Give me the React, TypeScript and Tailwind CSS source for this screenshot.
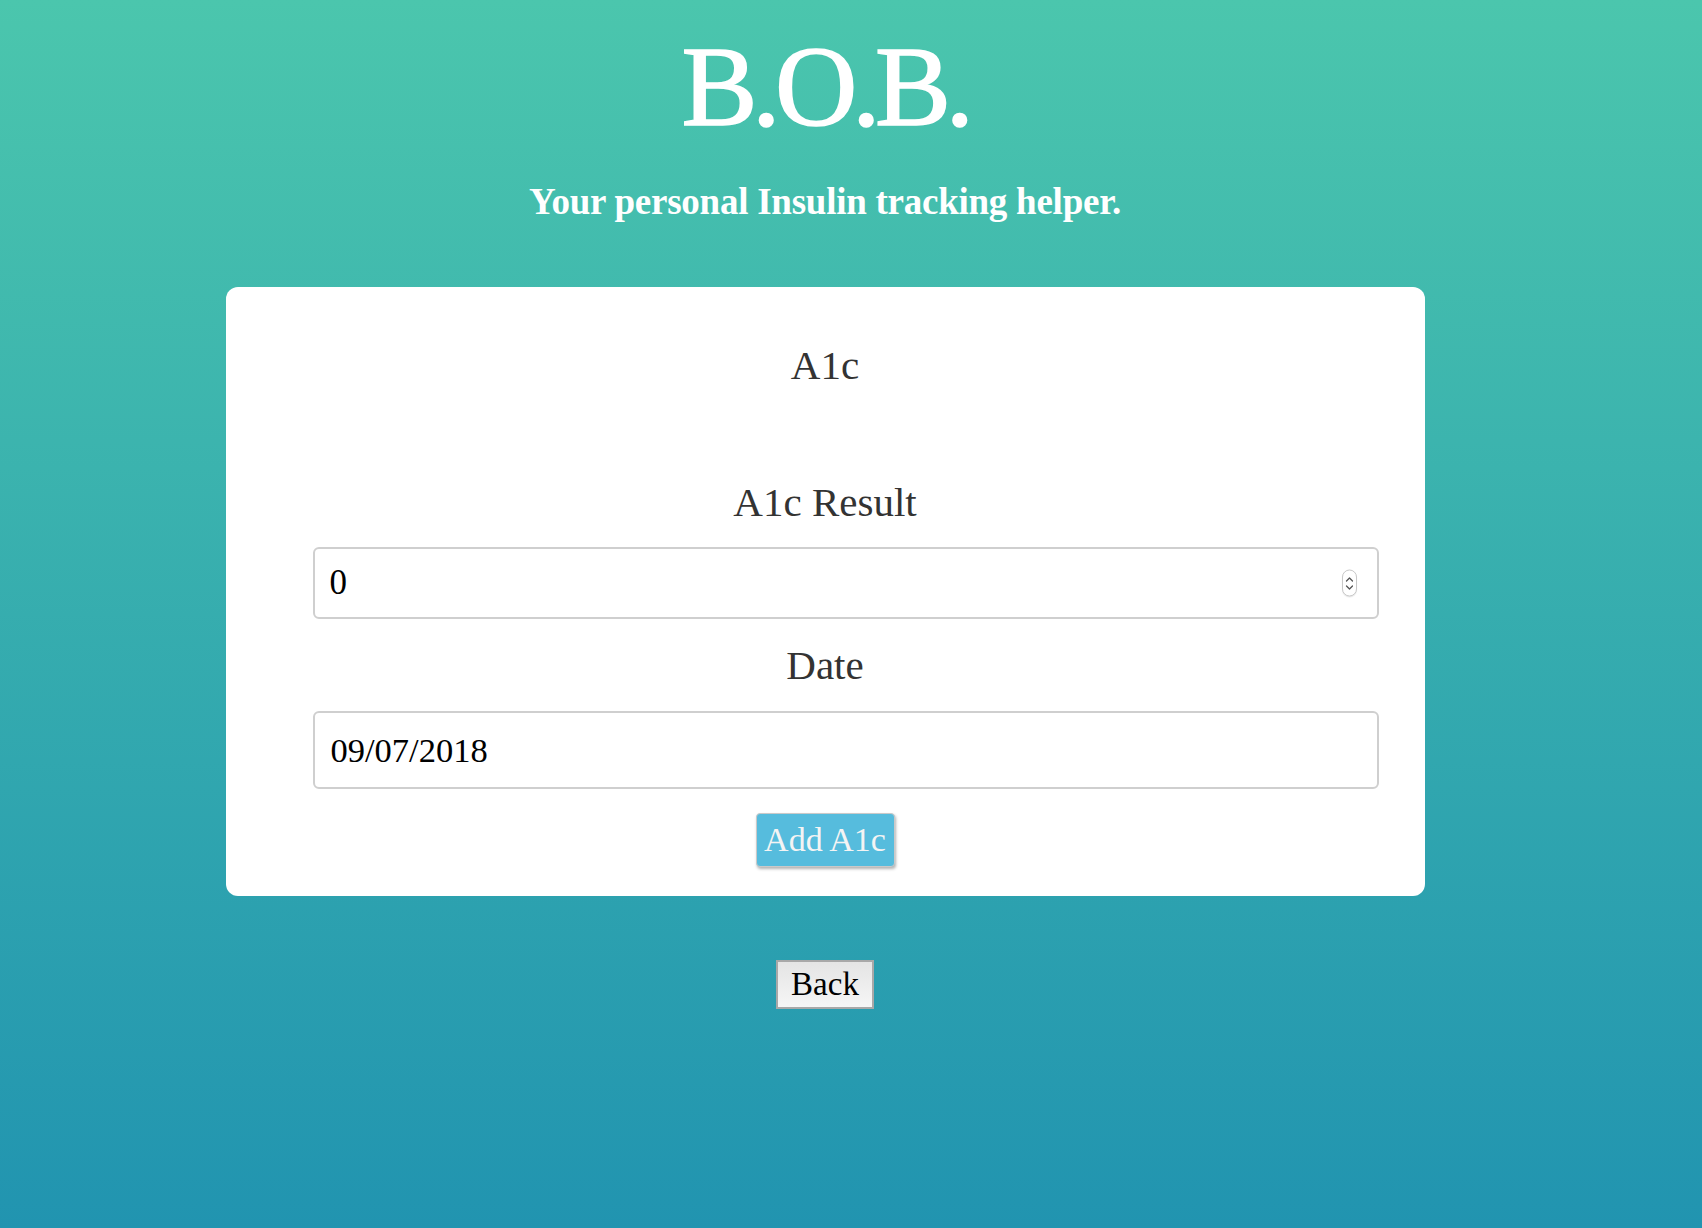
import React from "react";

const serif = { fontFamily: '"Liberation Serif", "DejaVu Serif", serif' };

function Spinner() {
  return (
    <div className="absolute right-[22px] top-1/2 -translate-y-1/2 w-[15px] h-[27px] rounded-full border border-[#c8c8c8] bg-white flex flex-col items-center justify-center gap-[2px] shadow-[0_1px_1px_rgba(0,0,0,0.08)]">
      <svg width="9" height="6" viewBox="0 0 9 6" fill="none">
        <path d="M1.5 4.5 L4.5 1.5 L7.5 4.5" stroke="#555" strokeWidth="1.3" strokeLinecap="round" strokeLinejoin="round" />
      </svg>
      <svg width="9" height="6" viewBox="0 0 9 6" fill="none">
        <path d="M1.5 1.5 L4.5 4.5 L7.5 1.5" stroke="#555" strokeWidth="1.3" strokeLinecap="round" strokeLinejoin="round" />
      </svg>
    </div>
  );
}

export default function App() {
  return (
    <div
      className="min-h-[1228px] w-full bg-[linear-gradient(to_bottom,#4bc6ad,#2194b0)]"
      style={serif}
    >
      <div className="w-[1650px] flex flex-col items-center">
        <h1 className="mt-[30px] text-[114px] leading-none tracking-[-5.5px] text-white font-normal [-webkit-text-stroke:1.6px_white]">
          B.O.B.
        </h1>
        <p className="mt-[39px] text-[37px] leading-none font-bold text-white tracking-[-0.25px]">
          Your personal Insulin tracking helper.
        </p>

        <div className="mt-[67px] w-[1199px] bg-white rounded-[12px] pt-[58px] pb-[29px] flex flex-col">
          <h2 className="text-center text-[41px] leading-none text-[#333] font-normal">A1c</h2>
          <label className="mt-[96px] text-center text-[41px] leading-none text-[#333]">A1c Result</label>
          <div className="relative mt-[24px] ml-[87px] mr-[46px] h-[72px]">
            <input
              type="text"
              readOnly
              value="0"
              className="w-full h-full rounded-[6px] border-2 border-[#cfcfcf] bg-white pl-[15px] text-[35px] text-black outline-none"
              style={serif}
            />
            <Spinner />
          </div>
          <label className="mt-[26px] text-center text-[41px] leading-none text-[#333]">Date</label>
          <div className="mt-[25px] ml-[87px] mr-[46px] h-[78px]">
            <input
              type="text"
              readOnly
              value="09/07/2018"
              className="w-full h-full rounded-[6px] border-2 border-[#cfcfcf] bg-white pl-[16px] text-[34.5px] text-black outline-none"
              style={serif}
            />
          </div>
          <div className="mt-[24px] flex justify-center">
            <button
              className="w-[139px] h-[54px] rounded-[4px] border border-[#c9c9c9] bg-[#56bcdd] text-[34px] leading-none text-[#f4f4f4] shadow-[1px_2px_3px_rgba(0,0,0,0.3)] flex items-center justify-center"
              style={serif}
            >
              Add A1c
            </button>
          </div>
        </div>

        <button
          className="mt-[64px] w-[98px] h-[49px] border-2 border-[#a8a8a8] bg-[linear-gradient(to_bottom,#e4e4e4,#f6f6f6)] text-[33px] leading-none text-black flex items-center justify-center"
          style={serif}
        >
          Back
        </button>
      </div>
    </div>
  );
}
